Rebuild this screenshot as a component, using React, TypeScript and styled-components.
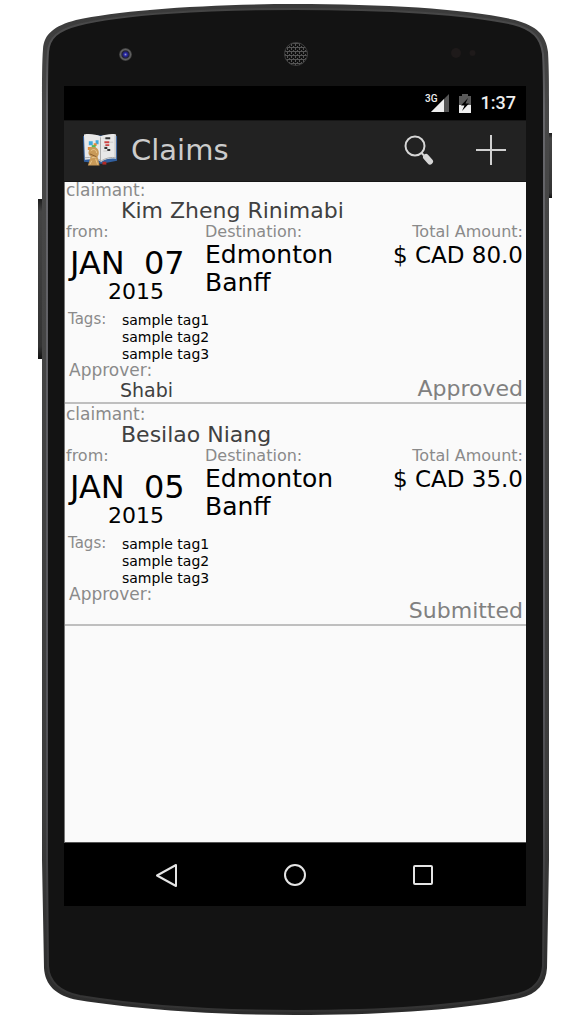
import React from 'react';
import styled, { createGlobalStyle } from 'styled-components';

const GlobalStyle = createGlobalStyle`
  *, *::before, *::after { box-sizing: border-box; }
  body {
    margin: 0;
    background: #fff;
    font-family: 'DejaVu Sans', Verdana, sans-serif;
  }
  ul, dl, dd, h1, h2, p { margin: 0; padding: 0; list-style: none; font-weight: normal; }
`;

const Page = styled.div`
  min-height: 100vh;
  display: flex;
  flex-direction: column;
  padding: 4px 35px 15px 38px;
`;

const Phone = styled.div`
  position: relative;
  flex: 1;
  display: flex;
  flex-direction: column;
  padding: 82px 26px 109px;
`;

const PhoneArt = styled.svg`
  position: absolute;
  inset: 0;
  width: 100%;
  height: 100%;
`;

const Screen = styled.div`
  position: relative;
  flex: 1;
  display: flex;
  flex-direction: column;
  background: #000;
`;

const StatusBar = styled.div`
  height: 34px;
  display: flex;
  align-items: center;
  justify-content: flex-end;
  gap: 10px;
  padding-right: 10px;
  font: 500 18px/34px Roboto, sans-serif;
  color: #eee;
  svg { display: block; }
`;

const Network = styled.span`
  display: flex;
  align-items: flex-start;
  font: 500 10px/10px Roboto, sans-serif;
  svg { margin-left: -7px; }
`;

const AppBar = styled.header`
  height: 62px;
  display: flex;
  align-items: center;
  padding: 0 19px 2px 18px;
  background: #222;
  border-top: 1px solid #161616;
  border-bottom: 1px solid #161616;
`;

const Title = styled.h1`
  flex: 1;
  margin-left: 12px;
  font-size: 29px;
  line-height: 58px;
  color: #ccc;
`;

const BarButton = styled.button`
  display: block;
  width: 32px;
  height: 32px;
  padding: 0;
  border: 0;
  background: none;
  svg { display: block; }
  & + & { margin-left: 41px; }
`;

const ClaimList = styled.ul`
  flex: 1;
  background: #fafafa;
  border-left: 1px solid #777;
  border-bottom: 1px solid #555;
`;

const Claim = styled.li`
  padding: 1px 3px 0 1px;
  border-bottom: 2px solid #bfbfbf;
  & + & { padding-top: 3px; }
`;

const Label = styled.div<{ $size?: number }>`
  font-size: ${({ $size = 16 }) => $size}px;
  line-height: 14px;
  color: #8a8a8a;
  white-space: nowrap;
`;

const Claimant = styled.h2`
  padding-left: 55px;
  font-size: 22px;
  line-height: 28px;
  color: #404040;
`;

const Columns = styled.div`
  display: grid;
  grid-template-columns: 139px 1fr auto;
`;

const DateBlock = styled.div`
  padding: 7px 0 0 4px;
`;

const DayLine = styled.div`
  display: grid;
  grid-template-columns: 74px auto;
  font-size: 32px;
  line-height: 34px;
`;

const Year = styled.div`
  padding-left: 38px;
  font-size: 22px;
  line-height: 24px;
`;

const Place = styled.li`
  font-size: 25px;
  line-height: 28px;
`;

const Places = styled.ul`
  padding-top: 2px;
`;

const Total = styled.div`
  text-align: right;
`;

const Amount = styled.div`
  padding-top: 2px;
  font-size: 23px;
  line-height: 28px;
`;

const Tags = styled.div`
  display: grid;
  grid-template-columns: 54px 1fr;
  padding: 8px 0 0 2px;
`;

const Tag = styled.li`
  font-size: 14px;
  line-height: 17px;
`;

const Footer = styled.div`
  display: flex;
  justify-content: space-between;
  align-items: flex-end;
  min-height: 37px;
`;

const Approver = styled.div`
  align-self: flex-start;
  padding-left: 3px;
`;

const ApproverName = styled.div`
  margin-top: 1px;
  padding-left: 51px;
  font-size: 19px;
  line-height: 24px;
  color: #404040;
`;

const Status = styled.div`
  font-size: 22px;
  line-height: 26px;
  color: #808080;
`;

const NavBar = styled.nav`
  height: 63px;
  display: flex;
  align-items: center;
  justify-content: center;
  gap: 96px;
`;

const NavButton = styled.button`
  width: 32px;
  height: 32px;
  padding: 0;
  border: 0;
  background: none;
  svg { display: block; }
`;

interface ClaimData {
  claimant: string;
  month: string;
  day: string;
  year: string;
  places: string[];
  total: string;
  tags: string[];
  approver?: string;
  status: string;
}

const claims: ClaimData[] = [
  {
    claimant: 'Kim Zheng Rinimabi',
    month: 'JAN', day: '07', year: '2015',
    places: ['Edmonton', 'Banff'],
    total: '$ CAD 80.0',
    tags: ['sample tag1', 'sample tag2', 'sample tag3'],
    approver: 'Shabi',
    status: 'Approved',
  },
  {
    claimant: 'Besilao Niang',
    month: 'JAN', day: '05', year: '2015',
    places: ['Edmonton', 'Banff'],
    total: '$ CAD 35.0',
    tags: ['sample tag1', 'sample tag2', 'sample tag3'],
    status: 'Submitted',
  },
];

const outline =
  'M42 100 C42 80 42 62 43 49 C44 34 54 26 76 20 C120 10 210 4 295 4 C385 4 470 9 515 20 C537 26 546 35 548 52 C549 70 549 85 549 100 L549 860 L547 968 C546 984 537 994 520 998 C462 1010 380 1015 295 1015 C210 1015 135 1009 78 1000 C56 996 45 985 44 968 L42 860 Z';

const face =
  'M47 100 C47 80 47 64 48 52 C49 38 58 30 78 25 C120 14 210 9 295 9 C385 9 470 14 513 24 C533 29 541 38 543 54 C544 70 544 85 544 100 L544 860 L543 966 C542 980 534 990 518 994 C462 1006 380 1011 295 1011 C210 1011 135 1005 80 996 C60 992 49 982 48 966 L47 860 Z';

const PhoneBody = () => (
  <PhoneArt viewBox="38 4 514 1011" preserveAspectRatio="none" aria-hidden="true">
    <defs>
      <pattern id="grille" width="4" height="4" patternUnits="userSpaceOnUse">
        <rect width="4" height="4" fill="#555" />
        <rect x="0" y="0" width="3" height="2" fill="#111" />
        <rect x="2" y="2" width="2" height="1" fill="#111" />
        <rect x="0" y="2" width="1" height="1" fill="#111" />
      </pattern>
      <radialGradient id="lens">
        <stop offset="0" stopColor="#99b" />
        <stop offset="0.25" stopColor="#22a" />
        <stop offset="0.55" stopColor="#223" />
        <stop offset="0.75" stopColor="#666" />
        <stop offset="1" stopColor="#333" />
      </radialGradient>
      <linearGradient id="key" x1="0" x2="0" y1="0" y2="1">
        <stop offset="0" stopColor="#1c1c1c" />
        <stop offset="0.08" stopColor="#444" />
        <stop offset="0.92" stopColor="#333" />
        <stop offset="1" stopColor="#111" />
      </linearGradient>
      <linearGradient id="rim" x1="0" x2="0" y1="0" y2="1">
        <stop offset="0" stopColor="#3a3a3a" />
        <stop offset="0.1" stopColor="#484848" />
        <stop offset="0.8" stopColor="#3c3c3c" />
        <stop offset="1" stopColor="#2c2c2c" />
      </linearGradient>
      <linearGradient id="bevel" x1="0" x2="0" y1="0" y2="1">
        <stop offset="0" stopColor="#444" />
        <stop offset="0.1" stopColor="#66666a" />
        <stop offset="0.7" stopColor="#55555a" />
        <stop offset="1" stopColor="#333" />
      </linearGradient>
    </defs>
    <rect x="38" y="199" width="5" height="160" fill="url(#key)" />
    <rect x="547" y="133" width="5" height="65" fill="url(#key)" />
    <path d={outline} fill="url(#rim)" />
    <path d={face} fill="#131313" stroke="url(#bevel)" strokeWidth="2" />
    <circle cx="125.500" cy="54.500" r="6.500" fill="url(#lens)" />
    <circle cx="296" cy="54" r="11.500" fill="url(#grille)" stroke="#3c3c3c" />
    <circle cx="456" cy="53" r="5" fill="#1e1a1a" />
    <circle cx="472.500" cy="53" r="3" fill="#1e1a1a" />
  </PhoneArt>
);

const SignalIcon = () => (
  <svg width="18" height="18" viewBox="0 0 18 18" aria-hidden="true">
    <path d="M18 0V18H0Z" fill="#555" />
    <path d="M13 5V18H0Z" fill="#eee" />
  </svg>
);

const BatteryIcon = () => (
  <svg width="12" height="19" viewBox="0 0 12 19" aria-hidden="true">
    <path d="M3 0h6v2h3v9H0V2h3Z" fill="#5a5a5a" />
    <path d="M0 11h12v8H0Z" fill="#eee" />
    <path d="M9 4 2 11.500h3.500L3 17l7-7.500H6.500Z" fill="#000" />
  </svg>
);

const BookIcon = () => (
  <svg width="37" height="34" viewBox="0 0 38 34" aria-hidden="true">
    <path d="M1 3 2 29 20 31 36 28V3L34 2 3 2Z" fill="#315f9e" />
    <path d="M2 1 C8 0 15 1 19 3 C24 1 30 0 35 1 V26 C30 25 24 26 20 29 C15 26 8 26 3 27Z" fill="#e8e8e8" />
    <path d="M19 4V29M3 25C9 24 15 25 20 28C25 25 30 24 35 25" fill="none" stroke="#aaa" />
    <path d="M34 2V25" stroke="#bbb" />
    <path d="M22 5h4M28 9h4M22 13h4M22 18h4" stroke="#ccc" />
    <path d="M24 5h5M23 15h3M26 17h3" stroke="#333" strokeWidth="2" />
    <path d="M23 9h5M24 12h4" stroke="#c44" strokeWidth="2" />
    <path d="M7 8h4v4H7ZM14 7h3v4h-3Z" fill="#40a8dc" />
    <path d="M6 14h4v3H6ZM12 10h3v3h-3Z" fill="#e58a36" />
    <path d="M10 12h4v3h-4Z" fill="#55b85a" />
    <path d="M7 18C7 15 9 14 12 14C16 14 18 18 17 22L16 24L18 33L6 33L9 24C7 22 6 21 7 18Z" fill="#c99a58" />
    <path d="M9 18c3-3 6-1 6 2M10 25l5-1M10 28l-2 4M14 26l2 6" fill="none" stroke="#e8c58c" />
    <path d="M8 21l7 3" stroke="#8a5d2c" />
    <path d="M21 29h4v3h-4Z" fill="#b22a25" />
  </svg>
);

const SearchIcon = () => (
  <svg width="32" height="32" viewBox="0 0 32 32" aria-hidden="true">
    <circle cx="13" cy="12" r="9.500" fill="none" stroke="#d6d6d6" strokeWidth="2" />
    <path d="M19 18.500 22 21.500" stroke="#d6d6d6" strokeWidth="2" />
    <path d="M24 23 28 27.500" stroke="#d6d6d6" strokeWidth="6" strokeLinecap="round" />
  </svg>
);

const PlusIcon = () => (
  <svg width="32" height="32" viewBox="0 0 32 32" aria-hidden="true">
    <path d="M16 1V31M1 16H31" stroke="#d0d0d0" strokeWidth="2" />
  </svg>
);

const ClaimItem = ({ claim }: { claim: ClaimData }) => (
  <Claim>
    <Label $size={17}>claimant:</Label>
    <Claimant>{claim.claimant}</Claimant>
    <Columns>
      <div>
        <Label>from:</Label>
        <DateBlock>
          <DayLine>
            <span>{claim.month}</span>
            <span>{claim.day}</span>
          </DayLine>
          <Year>{claim.year}</Year>
        </DateBlock>
      </div>
      <div>
        <Label>Destination:</Label>
        <Places>
          {claim.places.map((place) => <Place key={place}>{place}</Place>)}
        </Places>
      </div>
      <Total>
        <Label>Total Amount:</Label>
        <Amount>{claim.total}</Amount>
      </Total>
    </Columns>
    <Tags>
      <Label $size={15}>Tags:</Label>
      <ul>
        {claim.tags.map((tag) => <Tag key={tag}>{tag}</Tag>)}
      </ul>
    </Tags>
    <Footer>
      <Approver>
        <Label $size={17}>Approver:</Label>
        {claim.approver && <ApproverName>{claim.approver}</ApproverName>}
      </Approver>
      <Status>{claim.status}</Status>
    </Footer>
  </Claim>
);

export default function App() {
  return (
    <>
      <GlobalStyle />
      <Page>
        <Phone>
          <PhoneBody />
          <Screen>
            <StatusBar>
              <Network>3G<SignalIcon /></Network>
              <BatteryIcon />
              <span>1:37</span>
            </StatusBar>
            <AppBar>
              <BookIcon />
              <Title>Claims</Title>
              <BarButton aria-label="Search"><SearchIcon /></BarButton>
              <BarButton aria-label="Add claim"><PlusIcon /></BarButton>
            </AppBar>
            <ClaimList>
              {claims.map((claim) => <ClaimItem key={claim.claimant} claim={claim} />)}
            </ClaimList>
            <NavBar>
              <NavButton aria-label="Back">
                <svg width="32" height="32" viewBox="0 0 32 32">
                  <path d="M25 6V27L6 16.500Z" fill="none" stroke="#e4e4e4" strokeWidth="2" strokeLinejoin="round" />
                </svg>
              </NavButton>
              <NavButton aria-label="Home">
                <svg width="32" height="32" viewBox="0 0 32 32">
                  <circle cx="16" cy="16" r="10" fill="none" stroke="#e4e4e4" strokeWidth="2" />
                </svg>
              </NavButton>
              <NavButton aria-label="Recent apps">
                <svg width="32" height="32" viewBox="0 0 32 32">
                  <rect x="7" y="7" width="18" height="18" rx="1" fill="none" stroke="#e4e4e4" strokeWidth="2" />
                </svg>
              </NavButton>
            </NavBar>
          </Screen>
        </Phone>
      </Page>
    </>
  );
}
